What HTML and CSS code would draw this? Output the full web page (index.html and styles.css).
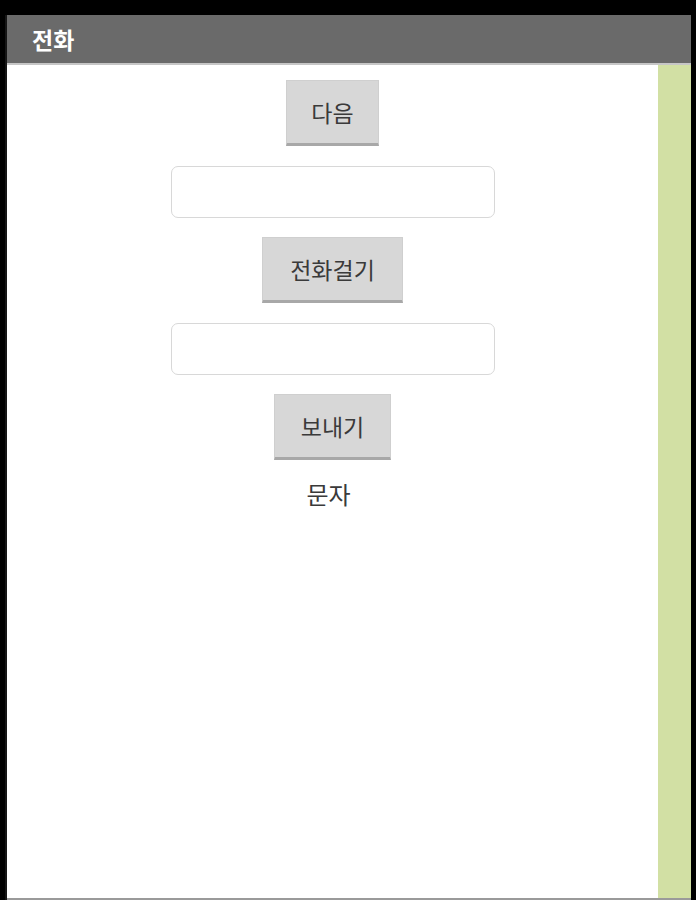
FILE: index.html
```html
<!DOCTYPE html>
<html lang="ko">
<head>
<meta charset="utf-8">
<title>전화</title>
<link rel="stylesheet" href="styles.css">
</head>
<body>
<div class="device">
  <div class="titlebar"><span class="title">전화</span></div>
  <div class="main">
    <div class="content">
      <button class="btn btn-next">다음</button>
      <input class="field" type="text">
      <button class="btn btn-call">전화걸기</button>
      <input class="field" type="text">
      <button class="btn btn-send">보내기</button>
      <div class="label">문자</div>
    </div>
    <div class="side"></div>
  </div>
</div>
</body>
</html>
```
FILE: styles.css
```css
html, body {
  margin: 0;
  padding: 0;
  background: #000;
  height: 900px;
  overflow: hidden;
  font-family: "Noto Sans CJK KR", "Noto Sans", sans-serif;
}
.device {
  margin: 15px 5px 0 5px;
  height: 885px;
  display: flex;
  flex-direction: column;
  border-left: 2px solid #161616;
  box-sizing: border-box;
}
.titlebar {
  height: 48px;
  background: #6a6a6a;
  border-bottom: 2px solid #c6c6c6;
  display: flex;
  align-items: center;
  padding-left: 25px;
  flex: none;
}
.title {
  color: #fff;
  font-size: 23px;
  font-weight: 700;
}
.main {
  flex: 1;
  display: flex;
  border-bottom: 2px solid #9a9a9a;
}
.content {
  flex: 1;
  background: #fff;
  display: flex;
  flex-direction: column;
  align-items: center;
  padding-top: 15px;
}
.side {
  width: 33px;
  background: #d2e0a4;
}
.btn {
  font-family: inherit;
  font-size: 23px;
  color: #3a3a3a;
  background: #d7d7d7;
  border: 1px solid #cfcfcf;
  border-bottom: 3px solid #a8a8a8;
  height: 66px;
  padding: 0;
  margin: 0;
  box-sizing: border-box;
}
.btn-next { width: 93px; }
.btn-call { width: 141px; }
.btn-send { width: 117px; }
.field {
  width: 324px;
  height: 52px;
  box-sizing: border-box;
  border: 1px solid #d8d8d8;
  border-radius: 7px;
  background: #fff;
  margin: 20px 0 19px 0;
}
.label {
  margin-top: 16px;
  font-size: 24px;
  color: #3a3a3a;
  line-height: 36px;
  margin-right: 8px;
}
```
